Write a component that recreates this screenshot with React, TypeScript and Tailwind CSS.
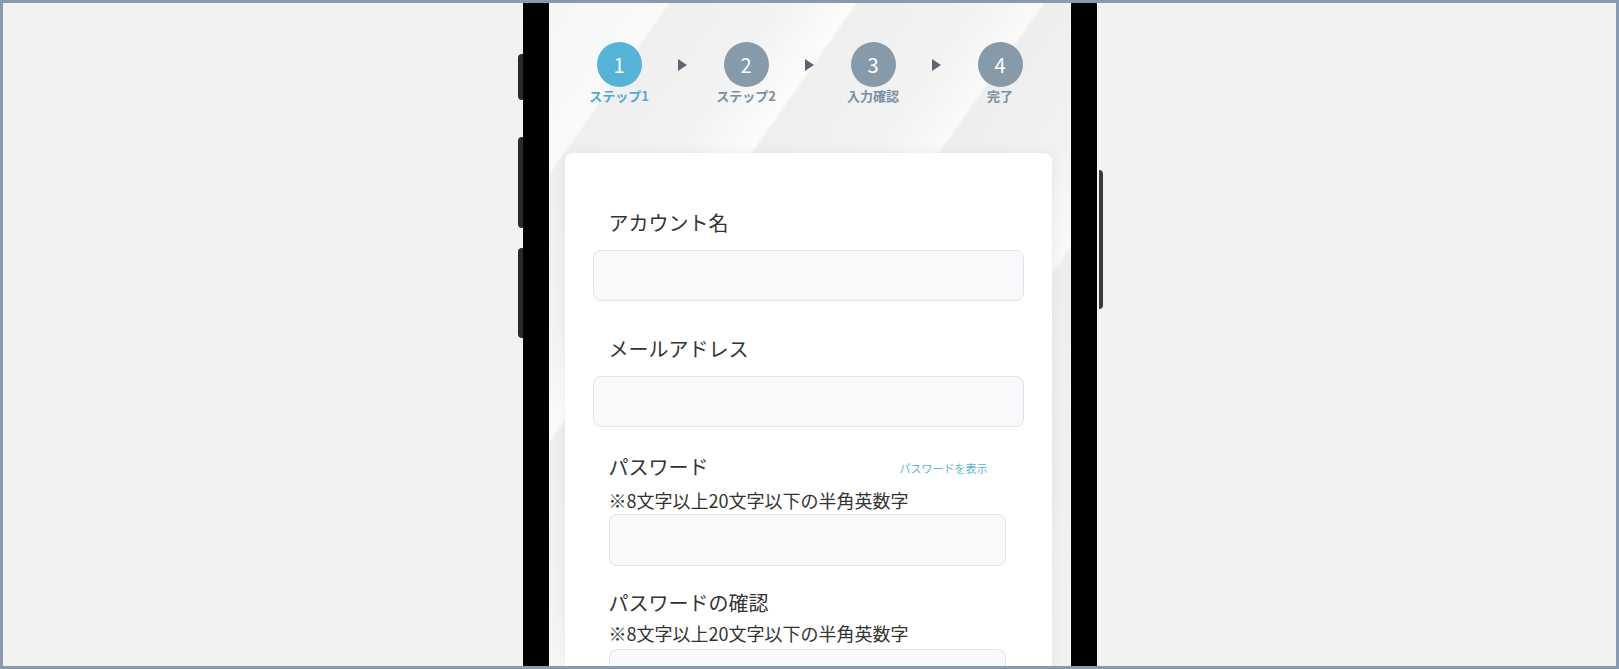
import React from 'react';

const steps = [
  { num: '1', label: 'ステップ1', active: true },
  { num: '2', label: 'ステップ2', active: false },
  { num: '3', label: '入力確認', active: false },
  { num: '4', label: '完了', active: false },
];

const font = { fontFamily: '"Noto Sans CJK JP", "Noto Sans", sans-serif' };

const Arrow: React.FC = () => (
  <div className="w-[44px] h-[45px] flex items-center justify-center">
    <svg width="9" height="12" viewBox="0 0 9 12"><polygon points="0,0 9,6 0,12" fill="#5b6670" /></svg>
  </div>
);

const Stepper: React.FC = () => (
  <div className="flex justify-center items-start pt-[39px]">
    {steps.map((s, i) => (
      <React.Fragment key={s.num}>
        <div className="w-[83px] flex flex-col items-center">
          <div className={`w-[45px] h-[45px] rounded-full flex items-center justify-center text-white text-[20px] leading-none ${s.active ? 'bg-[#55b3d7]' : 'bg-[#869aa9]'}`}>
            {s.num}
          </div>
          <div className={`text-[13px] leading-[18px] font-bold whitespace-nowrap ${s.active ? 'text-[#4faad0]' : 'text-[#7a8fa0]'}`}>{s.label}</div>
        </div>
        {i < steps.length - 1 && <Arrow />}
      </React.Fragment>
    ))}
  </div>
);

const Input: React.FC<{ className?: string }> = ({ className = '' }) => (
  <div className={`h-[51px] rounded-lg bg-[#f8f9fb] border-[1.5px] border-[#e1e4e9] ${className}`} />
);

export default function App() {
  return (
    <div style={font} className="w-[1619px] h-[669px] border-[3px] border-[#8899b0] bg-[#f2f2f2] overflow-hidden flex justify-center">
      <div className="relative w-[574px] h-full">
        {/* side buttons */}
        <div className="absolute left-[-5px] top-[51px] w-[5px] h-[46px] rounded-l bg-[#2a2a2a]" />
        <div className="absolute left-[-5px] top-[134px] w-[5px] h-[91px] rounded-l bg-[#2a2a2a]" />
        <div className="absolute left-[-5px] top-[245px] w-[5px] h-[90px] rounded-l bg-[#2a2a2a]" />
        <div className="absolute right-[-6px] top-[167px] w-[4px] h-[139px] rounded-r bg-[#3a3a3a]" />

        <div className="h-full border-x-[26px] border-black bg-[#f0f0f0] bg-[linear-gradient(125deg,#f6f6f6_0%,#fafafa_12%,#efefef_12.4%,#f3f3f3_24%,#fcfcfc_31%,#efefef_31.4%,#f3f3f3_44%,#fafafa_50%,#eeeeee_50.4%,#f2f2f2_62%,#f9f9f9_70%,#eeeeee_70.4%,#f2f2f2_100%)] overflow-hidden">
          <Stepper />

          <div className="ml-4 mr-[19px] mt-[48px] bg-white rounded-lg shadow-[0_0_14px_rgba(0,0,0,0.06)] px-[28px] pt-[55px] pb-10 text-[#333333]">
            <div className="pl-4 text-[20px] leading-[30px]">アカウント名</div>
            <Input className="mt-3" />

            <div className="pl-4 mt-[33px] text-[20px] leading-[30px]">メールアドレス</div>
            <Input className="mt-[12px]" />

            <div className="pl-4 pr-[18px] mt-[25px]">
              <div className="flex items-center justify-between h-[30px]">
                <span className="text-[20px] leading-[30px]">パスワード</span>
                <span className="text-[11px] text-[#5fb3d6] mr-[18px] mt-[3px]">パスワードを表示</span>
              </div>
              <div className="mt-[5px] text-[18px] leading-[26px]">※8文字以上20文字以下の半角英数字</div>
              <Input className="mt-[1px] h-[52px]" />

              <div className="mt-[22px] text-[20px] leading-[30px]">パスワードの確認</div>
              <div className="mt-[2px] text-[18px] leading-[26px]">※8文字以上20文字以下の半角英数字</div>
              <Input className="mt-[3px] h-[52px]" />
            </div>
          </div>
        </div>
      </div>
    </div>
  );
}
